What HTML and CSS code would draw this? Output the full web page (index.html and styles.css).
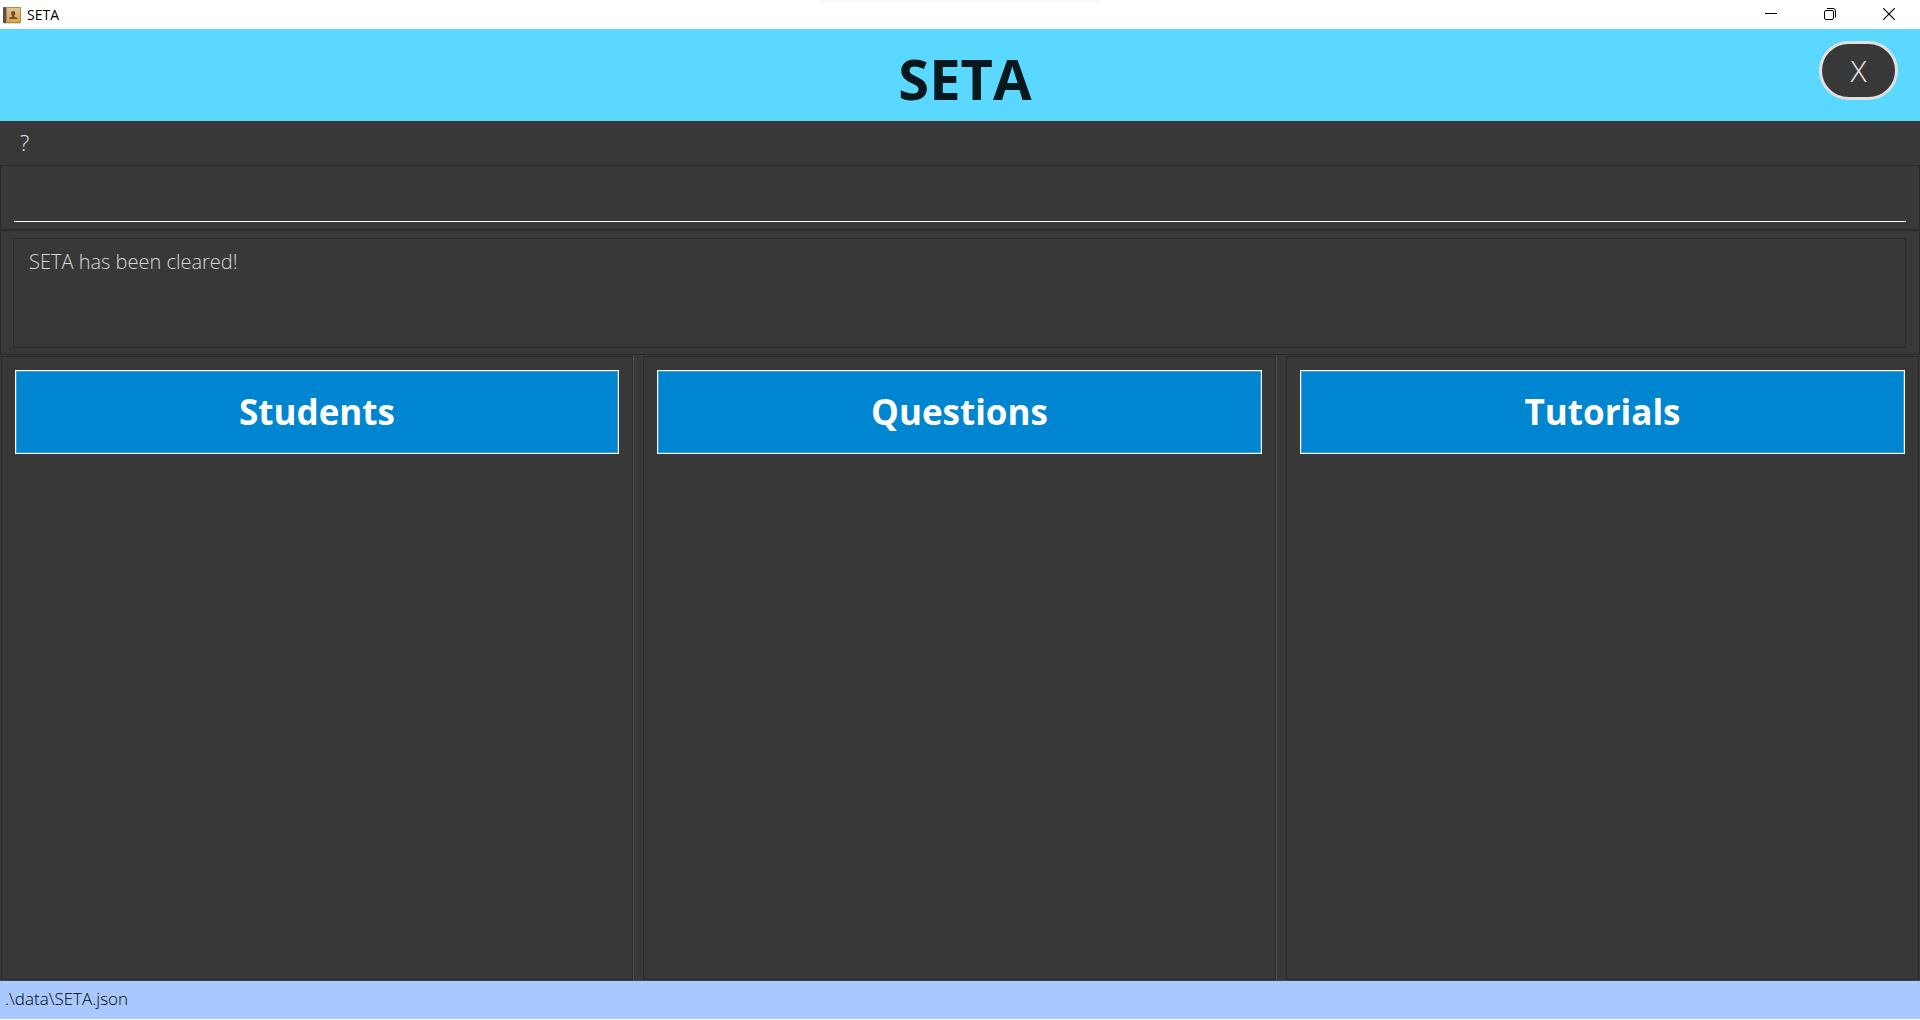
FILE: index.html
```html
<!DOCTYPE html>
<html lang="en">
<head>
<meta charset="utf-8">
<title>SETA</title>
<link rel="stylesheet" href="styles.css">
</head>
<body>
<div class="window">
  <div class="titlebar">
    <svg class="app-icon" width="18" height="18" viewBox="0 0 18 18" aria-hidden="true">
      <defs>
        <linearGradient id="cover" x1="0" y1="0" x2="0" y2="1">
          <stop offset="0" stop-color="#e2c48c"/>
          <stop offset="1" stop-color="#dba548"/>
        </linearGradient>
      </defs>
      <path d="M1 17.500h16" stroke="#d8d8d8"/>
      <rect x="0" y="1" width="18" height="16" rx="1" fill="#b58a42"/>
      <rect x="4" y="2" width="13" height="14" fill="url(#cover)"/>
      <rect x="0" y="1" width="3" height="16" rx="1" fill="#5b5050"/>
      <rect x="3" y="1" width="1" height="16" fill="#a08a68"/>
      <path d="M10.200 5c1.400 0 2 .9 2 2.200 0 1.300-.5 1.900-.9 2.500v1.100c1.200.4 3.200.7 3.200 2.200H6c0-1.500 2-1.800 3.100-2.200V9.700c-.4-.6-.9-1.200-.9-2.500C8.200 5.900 8.800 5 10.200 5z" fill="#69502f"/>
    </svg>
    <span class="window-title">SETA</span>
    <div class="window-controls">
      <button class="window-button" type="button" aria-label="Minimize">
        <svg width="12" height="12" viewBox="0 0 12 12"><path d="M0 5.500h12" stroke="#000"/></svg>
      </button>
      <button class="window-button" type="button" aria-label="Restore">
        <svg width="12" height="12" viewBox="0 0 12 12" fill="none" stroke="#000"><rect x=".5" y="2.500" width="9" height="9" rx="1.500"/><path d="M3 .5h6a2.500 2.500 0 0 1 2.500 2.500v6.500"/></svg>
      </button>
      <button class="window-button" type="button" aria-label="Close window">
        <svg width="12" height="12" viewBox="0 0 12 12"><path d="M.3.3l11.400 11.400M11.700.3L.3 11.700" stroke="#000" stroke-width="1.200"/></svg>
      </button>
    </div>
  </div>

  <header class="header">
    <h1 class="brand">SETA</h1>
    <button class="exit-button" type="button">X</button>
  </header>

  <nav class="menu"><button class="menu-button" type="button">?</button></nav>

  <div class="command">
    <input class="command-input" type="text" aria-label="Command">
  </div>

  <div class="result">
    <output class="result-text">SETA has been cleared!</output>
  </div>

  <main class="panels">
    <section class="panel"><h2 class="panel-title">Students</h2></section>
    <div class="divider"></div>
    <section class="panel"><h2 class="panel-title">Questions</h2></section>
    <div class="divider"></div>
    <section class="panel"><h2 class="panel-title">Tutorials</h2></section>
  </main>

  <footer class="status">.\data\SETA.json</footer>
</div>
</body>
</html>
```
FILE: styles.css
```css
* {
  box-sizing: border-box;
}

body {
  margin: 0;
  background: #fff;
  font-family: "Open Sans", "Noto Sans", sans-serif;
}

button,
input {
  margin: 0;
  padding: 0;
  border: 0;
  background: none;
  font: inherit;
}

.window {
  display: flex;
  flex-direction: column;
  min-height: 100vh;
  padding-bottom: 1px;
}

.titlebar {
  display: flex;
  align-items: center;
  height: 29px;
  padding-left: 3px;
  background:
    linear-gradient(#f8f8f8, #fff) top center / 280px 5px no-repeat,
    #fff;
}

.window-title {
  margin-left: 6px;
  font-size: 14px;
  line-height: 20px;
  color: #000;
}

.window-controls {
  display: flex;
  align-self: stretch;
  margin-left: auto;
  padding-right: 2px;
}

.window-button {
  display: flex;
  align-items: center;
  justify-content: center;
  width: 59px;
  padding-bottom: 1px;
}

.header {
  display: grid;
  grid-template-columns: 1fr auto 1fr;
  height: 92px;
  padding: 12px 22px 0 32px;
  background: #5ad8ff;
}

.brand {
  grid-column: 2;
  margin: 0;
  font-size: 56px;
  line-height: 74px;
  font-weight: 700;
  color: #07191c;
}

.exit-button {
  justify-self: end;
  width: 79px;
  height: 59px;
  border: 3px solid #e0e0e0;
  border-radius: 30px;
  background: #383838;
  font-size: 30px;
  line-height: 40px;
  font-weight: 300;
  color: #e8e8e8;
}

.menu {
  height: 44px;
  padding: 7px 20px;
  background: #383838;
}

.menu-button {
  font-size: 22px;
  line-height: 28px;
  font-weight: 300;
  color: #e8e8e8;
}

.command {
  height: 65px;
  padding: 7px 13px;
  border: 1px solid #2b2b2b;
  background: #383838;
}

.command-input {
  display: block;
  width: 100%;
  height: 49px;
  border-bottom: 1px solid #fff;
  font-size: 20px;
  font-weight: 300;
  color: #fff;
  outline: 0;
}

.result {
  height: 125px;
  padding: 7px 13px 6px 12px;
  border: 1px solid #2b2b2b;
  background: #383838;
}

.result-text {
  display: block;
  height: 110px;
  padding: 8px 15px;
  border: 1px solid #2b2b2b;
  font-size: 20px;
  line-height: 30px;
  font-weight: 300;
  color: #d8d8d8;
}

.panels {
  display: grid;
  grid-template-columns: 632fr 10px 633fr 10px 633fr;
  flex: 1;
  padding: 1px 1px 0;
  border-bottom: 1px solid #444;
  background: #383838;
}

.panel {
  padding: 13px;
  border: 1px solid #2b2b2b;
}

.divider {
  border-left: 1px solid #505050;
}

.panel-title {
  margin: 0;
  border: 1px solid #fff;
  background: #0086d1;
  box-shadow: inset 0 0 0 1px #3aa0d8;
  font-size: 35px;
  line-height: 82px;
  font-weight: 700;
  text-align: center;
  color: #fff;
}

.status {
  padding: 3px 5px 5px;
  background: #a8c8ff;
  font-size: 17px;
  line-height: 30px;
  font-weight: 300;
  color: #000;
}
```
